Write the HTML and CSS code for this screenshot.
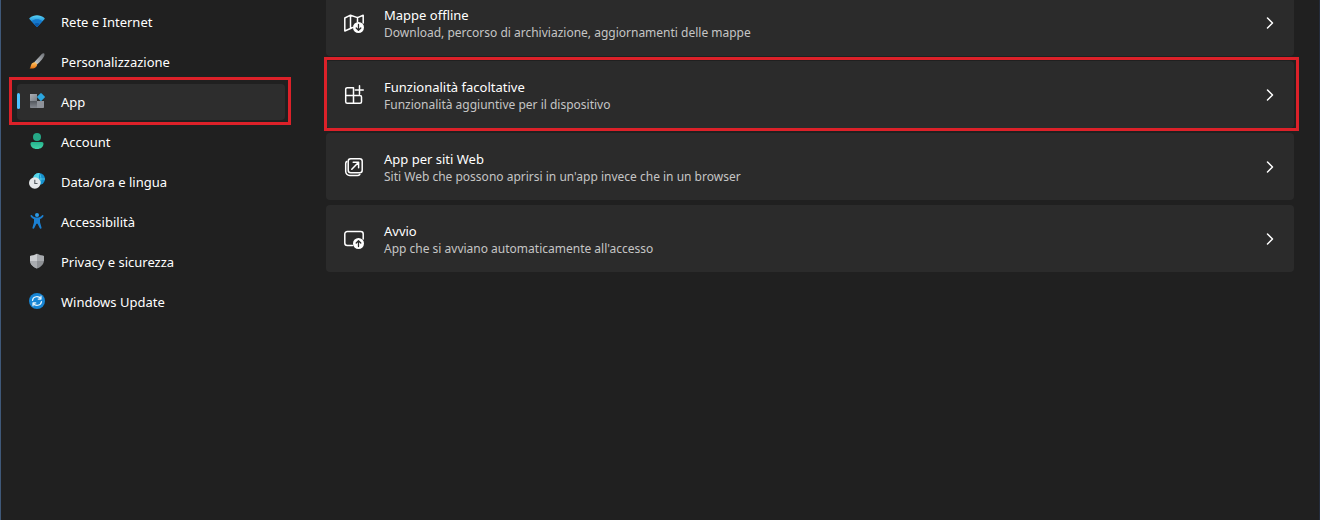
FILE: index.html
```html
<!DOCTYPE html>
<html lang="it">
<head>
    <meta charset="UTF-8">
    <meta name="viewport" content="width=device-width, initial-scale=1.0">
    <link rel="stylesheet" href="styles.css">
    <title>Impostazioni - App</title>
</head>
<body>
    <div class="window">
        <nav class="sidebar">
            <a class="nav-item" href="#">
                <svg class="nav-icon" viewBox="0 0 16 16">
                    <defs>
                        <linearGradient id="wifi" x1="0" y1="0" x2="0" y2="1">
                            <stop offset="0" stop-color="#5bd3f5"/>
                            <stop offset="0.45" stop-color="#2a9fe0"/>
                            <stop offset="1" stop-color="#0c62b8"/>
                        </linearGradient>
                    </defs>
                    <path d="M.6 6.200a.9.900 0 0 1 0-1.300C4.800 1.200 11.200 1.200 15.400 4.900a.9.900 0 0 1 0 1.300L8.700 13.500a1 1 0 0 1-1.400 0z" fill="url(#wifi)"/>
                    <path d="M2.700 8.200C5.600 5.600 10.400 5.600 13.300 8.200L8.700 13.500a1 1 0 0 1-1.400 0z" fill="#1478cc"/>
                    <path d="M5.200 11C6.800 9.600 9.200 9.600 10.800 11L8.700 13.500a1 1 0 0 1-1.400 0z" fill="#0b59a8"/>
                </svg>
                <span>Rete e Internet</span>
            </a>
            <a class="nav-item" href="#">
                <svg class="nav-icon" viewBox="0 0 16 16">
                    <defs>
                        <linearGradient id="handle" x1="0" y1="1" x2="1" y2="0">
                            <stop offset="0" stop-color="#d0d3d6"/>
                            <stop offset="1" stop-color="#6c7075"/>
                        </linearGradient>
                        <linearGradient id="bristle" x1="0" y1="0" x2="0" y2="1">
                            <stop offset="0" stop-color="#ffc465"/>
                            <stop offset="1" stop-color="#e8720c"/>
                        </linearGradient>
                    </defs>
                    <path d="M5.200 9.200L12.800 1C13.800 0 15.700 0 15.500 1.700C15.400 4 11.500 8.500 7.800 11.800z" fill="url(#handle)"/>
                    <path d="M4.600 9.400C6.600 9 8.700 11 7.900 12.800C6.900 15.300 3.700 15.900.6 15.500C2.300 14.200 1.300 10.200 4.600 9.400z" fill="url(#bristle)"/>
                </svg>
                <span>Personalizzazione</span>
            </a>
            <a class="nav-item active" href="#" aria-current="page">
                <svg class="nav-icon" viewBox="0 0 16 16">
                    <defs>
                        <linearGradient id="tile" x1="0" y1="0" x2="1" y2="1">
                            <stop offset="0" stop-color="#aaaeb4"/>
                            <stop offset="1" stop-color="#7b7f86"/>
                        </linearGradient>
                        <linearGradient id="tile2" x1="0" y1="0" x2="0" y2="1">
                            <stop offset="0" stop-color="#53575d"/>
                            <stop offset="1" stop-color="#858991"/>
                        </linearGradient>
                    </defs>
                    <path d="M1 1h7v7H1z" fill="url(#tile)"/>
                    <path d="M1 8h7v7H1.800a.8.800 0 0 1-.8-.8z" fill="url(#tile2)"/>
                    <path d="M8 8h7v6.200a.8.800 0 0 1-.8.800H8z" fill="#8e9299"/>
                    <path d="M11.500.3a1 1 0 0 1 1 0L15.700 3.400a.9.900 0 0 1 0 1.200L12.500 7.700a.9.900 0 0 1-1.100 0L8.300 4.600a.9.900 0 0 1 0-1.200z" fill="#2ba6df"/>
                </svg>
                <span>App</span>
                <i class="marker marker-nav"></i>
            </a>
            <a class="nav-item" href="#">
                <svg class="nav-icon" viewBox="0 0 16 16">
                    <defs>
                        <linearGradient id="person" x1="0" y1="0" x2="0" y2="1">
                            <stop offset="0" stop-color="#25b38c"/>
                            <stop offset="1" stop-color="#42d3a9"/>
                        </linearGradient>
                    </defs>
                    <circle cx="8" cy="4" r="4" fill="#25a886"/>
                    <path d="M3 9h10a1.500 1.500 0 0 1 1.500 1.500C14.500 13.800 12 16 8 16S1.500 13.800 1.500 10.500A1.500 1.500 0 0 1 3 9z" fill="url(#person)"/>
                </svg>
                <span>Account</span>
            </a>
            <a class="nav-item" href="#">
                <svg class="nav-icon" viewBox="0 0 16 16">
                    <circle cx="10" cy="6" r="6" fill="#1591cf"/>
                    <path d="M10 0a6 6 0 0 0-5.800 4.500L10 7.500z" fill="#55d5e8"/>
                    <path d="M4 6h12M10 0C7.500 3 7.500 9 10 12C12.500 9 12.500 3 10 0" fill="none" stroke="#6ae0ee" stroke-width="0.6"/>
                    <circle cx="5.800" cy="10" r="5.800" fill="#e5e8ea"/>
                    <path d="M5.800 6.800v3.700h2.700" fill="none" stroke="#555b60" stroke-width="1.1"/>
                </svg>
                <span>Data/ora e lingua</span>
            </a>
            <a class="nav-item" href="#">
                <svg class="nav-icon" viewBox="0 0 16 16">
                    <circle cx="8" cy="2" r="2" fill="#2b9ae6"/>
                    <path d="M2.900 2.200C4.500 4 6 4.600 8 4.600S11.500 4 13.100 2.200c.8-.7 1.900.4 1.200 1.200C13.200 4.700 12 5.600 11 6v3.200l1.500 5.300c.3 1.200-1.300 1.800-1.800.6L8.600 10.800H7.400L5.300 15.100c-.5 1.200-2.100.6-1.800-.6L5 9.200V6C4 5.600 2.800 4.700 1.700 3.400c-.7-.8.400-1.900 1.200-1.200z" fill="#1b80d2"/>
                </svg>
                <span>Accessibilità</span>
            </a>
            <a class="nav-item" href="#">
                <svg class="nav-icon" viewBox="0 0 16 16">
                    <path d="M8 .8C9.800 2 12 2.600 14.200 2.700a.8.800 0 0 1 .8.800V7c0 4.200-3 7-7 8.500C4 14 1 11.200 1 7V3.500a.8.800 0 0 1 .8-.8C4 2.600 6.200 2 8 .8z" fill="#8d9094"/>
                    <path d="M8 .8V8H1V3.500a.8.800 0 0 1 .8-.8C4 2.600 6.200 2 8 .8z" fill="#cbcdd0"/>
                    <path d="M8 8H1C1.300 11.700 4.200 14.100 8 15.500z" fill="#a9acb0"/>
                    <path d="M8 .8V8h7V3.500a.8.800 0 0 0-.8-.8C12 2.600 9.800 2 8 .8z" fill="#a6a9ad"/>
                </svg>
                <span>Privacy e sicurezza</span>
            </a>
            <a class="nav-item" href="#">
                <svg class="nav-icon" viewBox="0 0 16 16">
                    <circle cx="8" cy="8" r="8" fill="#1785d4"/>
                    <path d="M3.500 7.300C4 3.400 9.500 2.300 11.800 5.700M12 3.200v2.900H9.200M12.500 8.700C12 12.600 6.500 13.700 4.200 10.300M4 12.800V9.900h2.800" fill="none" stroke="#e6f5fd" stroke-width="1.2" stroke-linecap="round" stroke-linejoin="round"/>
                </svg>
                <span>Windows Update</span>
            </a>
        </nav>

        <main class="content">
            <a class="card" href="#">
                <svg class="card-icon" viewBox="0 0 20 20">
                    <path d="M8.500 14.500L6.500 15.500L.8 18V5L6.500 2.200L13.500 4.600L19.200 2.200V10M6.500 2.200V15.500M13.500 4.600V9" class="line"/>
                    <circle cx="14.500" cy="14.500" r="5.500" fill="#fff"/>
                    <path d="M14.500 11.500v5.500M12.200 15l2.300 2.300L16.800 15" class="dark-line"/>
                </svg>
                <span class="card-text">
                    <span class="card-title">Mappe offline</span>
                    <span class="card-desc">Download, percorso di archiviazione, aggiornamenti delle mappe</span>
                </span>
                <svg class="chevron" viewBox="0 0 8 12"><path d="M1.500 1L6.500 6L1.500 11" class="line"/></svg>
            </a>
            <a class="card" href="#">
                <svg class="card-icon" viewBox="0 0 20 20">
                    <path d="M9.500 2.700H3.200a1.500 1.500 0 0 0-1.500 1.500V16.800a1.500 1.500 0 0 0 1.500 1.500H16a1.500 1.500 0 0 0 1.500-1.500V12A1.500 1.500 0 0 0 16 10.500H1.700M9.500 2.700V18.300M15.500.8v8.400M11.300 5h8" class="line"/>
                </svg>
                <span class="card-text">
                    <span class="card-title">Funzionalità facoltative</span>
                    <span class="card-desc">Funzionalità aggiuntive per il dispositivo</span>
                </span>
                <svg class="chevron" viewBox="0 0 8 12"><path d="M1.500 1L6.500 6L1.500 11" class="line"/></svg>
                <i class="marker marker-card"></i>
            </a>
            <a class="card" href="#">
                <svg class="card-icon" viewBox="0 0 20 20">
                    <rect x="4.200" y="1.700" width="14" height="14" rx="2.500" class="line"/>
                    <path d="M2.800 4.500C2 5 1.700 5.700 1.700 6.500V14.500a4 4 0 0 0 4 4H13.500C14.500 18.500 15.300 18 15.800 17.400" class="line"/>
                    <path d="M7.800 12.300L14.400 5.500M9.200 5.300H14.600V10.700" class="line"/>
                </svg>
                <span class="card-text">
                    <span class="card-title">App per siti Web</span>
                    <span class="card-desc">Siti Web che possono aprirsi in un'app invece che in un browser</span>
                </span>
                <svg class="chevron" viewBox="0 0 8 12"><path d="M1.500 1L6.500 6L1.500 11" class="line"/></svg>
            </a>
            <a class="card" href="#">
                <svg class="card-icon" viewBox="0 0 20 20">
                    <path d="M8.500 16.500H3.300A2.500 2.500 0 0 1 .8 14V5a2.500 2.500 0 0 1 2.500-2.500H16.700A2.500 2.500 0 0 1 19.200 5V10" class="line"/>
                    <circle cx="14.500" cy="14.500" r="5.500" fill="#fff"/>
                    <path d="M14.500 17.500V12M12.200 14l2.300-2.300L16.800 14" class="dark-line"/>
                </svg>
                <span class="card-text">
                    <span class="card-title">Avvio</span>
                    <span class="card-desc">App che si avviano automaticamente all'accesso</span>
                </span>
                <svg class="chevron" viewBox="0 0 8 12"><path d="M1.500 1L6.500 6L1.500 11" class="line"/></svg>
            </a>
        </main>
    </div>
</body>
</html>
```
FILE: styles.css
```css
* {
    box-sizing: border-box;
}

body {
    margin: 0;
    background-color: #202020;
    font-family: 'Segoe UI', 'Noto Sans', sans-serif;
    color: #fff;
}

a {
    color: inherit;
    text-decoration: none;
}

.window {
    display: flex;
    gap: 41px;
    min-height: 100vh;
    padding-right: 25px;
    border-left: 1px solid #3f5878;
    border-right: 1px solid #242c3c;
    overflow: hidden;
}

.sidebar {
    display: flex;
    flex-direction: column;
    flex: none;
    gap: 4px;
    width: 284px;
    padding: 4px 0 0 16px;
}

.nav-item {
    position: relative;
    display: flex;
    align-items: center;
    gap: 16px;
    height: 36px;
    padding-left: 12px;
    border-radius: 4px;
    font-size: 13px;
    line-height: 20px;
}

.nav-item:hover,
.nav-item.active {
    background-color: #2d2d2d;
}

.nav-item.active::before {
    content: '';
    position: absolute;
    left: 0;
    top: 9px;
    width: 3px;
    height: 16px;
    border-radius: 2px;
    background-color: #4cc2ff;
}

.nav-icon {
    flex: none;
    width: 16px;
    height: 16px;
    margin-bottom: 2px;
}

.content {
    display: flex;
    flex-direction: column;
    flex: 1;
    gap: 5px;
    /* list is scrolled, the first card is partly out of view */
    margin-top: -11px;
}

.card {
    position: relative;
    display: flex;
    align-items: center;
    gap: 20px;
    height: 67px;
    padding: 0 20px 0 18px;
    border-radius: 4px;
    background-color: #2b2b2b;
}

.card:hover {
    background-color: #2f2f2f;
}

.card-icon {
    flex: none;
    width: 20px;
    height: 20px;
}

.card-text {
    display: flex;
    flex-direction: column;
    flex: 1;
    padding-top: 2px;
}

.card-title {
    font-size: 13px;
    line-height: 18px;
}

.card-desc {
    font-size: 12px;
    line-height: 17px;
    color: #c5c5c5;
}

.chevron {
    flex: none;
    width: 8px;
    height: 12px;
}

.line {
    fill: none;
    stroke: #fff;
    stroke-width: 1.5;
    stroke-linecap: round;
    stroke-linejoin: round;
}

.dark-line {
    fill: none;
    stroke: #2b2b2b;
    stroke-width: 1.3;
    stroke-linecap: round;
    stroke-linejoin: round;
}

/* red highlight frames */
.marker {
    position: absolute;
    z-index: 1;
    border: 3px solid #dc2129;
    pointer-events: none;
}

.marker-nav {
    inset: -7px -6px -5px -8px;
}

.marker-card {
    inset: -4px -5px -3px -2px;
}
```
